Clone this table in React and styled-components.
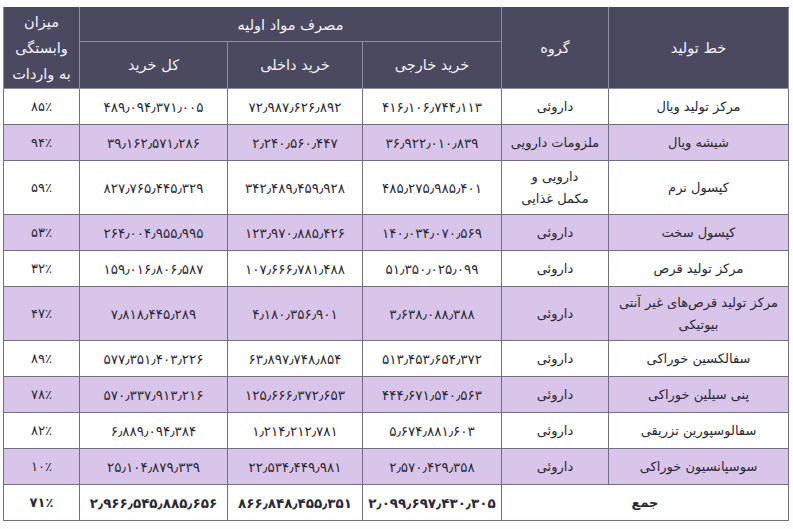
import styled, { createGlobalStyle } from "styled-components";

const GlobalStyle = createGlobalStyle`
	html, body {
		margin: 0;
		padding: 0;
		background: #ffffff;
	}
	body {
		font-family: "DejaVu Sans", "Noto Sans", sans-serif;
	}
`;

const Page = styled.div`
	width: 793px;
	height: 529px;
	padding: 7px 5px 0 3px;
	box-sizing: border-box;
	background: #fdfdfd;
`;

const Table = styled.table`
	width: 785px;
	border-collapse: collapse;
	table-layout: fixed;
	direction: rtl;
	color: #2a2934;
	font-size: 13px;
	border: 1.5px solid #55566a;
`;

const HeadCell = styled.th`
	background: #4a4960;
	color: #f4f3f8;
	font-weight: normal;
	font-size: 14.5px;
	line-height: 26px;
	height: ${({ $h }) => $h || 33}px;
	padding: 0 4px;
	border: 1px solid #8d8ca3;
	border-top-color: #4a4960;
	text-align: center;
	vertical-align: middle;
`;

const Row = styled.tr`
	background: ${({ $shade }) => ($shade ? "#d9c4ea" : "#ffffff")};
`;

const Cell = styled.td`
	height: ${({ $tall }) => ($tall ? 53 : 35)}px;
	padding: 0 4px;
	border: 1px solid #6f7084;
	text-align: center;
	vertical-align: middle;
	line-height: 22px;
	font-weight: ${({ $bold }) => ($bold ? "bold" : "normal")};
`;

const Num = styled(Cell)`
	direction: ltr;
	font-size: 13.5px;
	letter-spacing: 0.4px;
`;

// ردیف‌های جدول: خط تولید، گروه، خرید خارجی، خرید داخلی، کل خرید، وابستگی
const rows = [
	["مرکز تولید ویال", "داروئی", "۴۱۶٫۱۰۶٫۷۴۴٫۱۱۳", "۷۲٫۹۸۷٫۶۲۶٫۸۹۲", "۴۸۹٫۰۹۴٫۳۷۱٫۰۰۵", "۸۵٪"],
	["شیشه ویال", "ملزومات دارویی", "۳۶٫۹۲۲٫۰۱۰٫۸۳۹", "۲٫۲۴۰٫۵۶۰٫۴۴۷", "۳۹٫۱۶۲٫۵۷۱٫۲۸۶", "۹۴٪"],
	["کپسول نرم", "دارویی و\nمکمل غذایی", "۴۸۵٫۲۷۵٫۹۸۵٫۴۰۱", "۳۴۲٫۴۸۹٫۴۵۹٫۹۲۸", "۸۲۷٫۷۶۵٫۴۴۵٫۳۲۹", "۵۹٪", true],
	["کپسول سخت", "داروئی", "۱۴۰٫۰۳۴٫۰۷۰٫۵۶۹", "۱۲۳٫۹۷۰٫۸۸۵٫۴۲۶", "۲۶۴٫۰۰۴٫۹۵۵٫۹۹۵", "۵۳٪"],
	["مرکز تولید قرص", "داروئی", "۵۱٫۳۵۰٫۰۲۵٫۰۹۹", "۱۰۷٫۶۶۶٫۷۸۱٫۴۸۸", "۱۵۹٫۰۱۶٫۸۰۶٫۵۸۷", "۳۲٪"],
	["مرکز تولید قرص‌های غیر آنتی\nبیوتیکی", "داروئی", "۳٫۶۳۸٫۰۸۸٫۳۸۸", "۴٫۱۸۰٫۳۵۶٫۹۰۱", "۷٫۸۱۸٫۴۴۵٫۲۸۹", "۴۷٪", true],
	["سفالکسین خوراکی", "داروئی", "۵۱۳٫۴۵۳٫۶۵۴٫۳۷۲", "۶۳٫۸۹۷٫۷۴۸٫۸۵۴", "۵۷۷٫۳۵۱٫۴۰۳٫۲۲۶", "۸۹٪"],
	["پنی سیلین خوراکی", "داروئی", "۴۴۴٫۶۷۱٫۵۴۰٫۵۶۳", "۱۲۵٫۶۶۶٫۳۷۲٫۶۵۳", "۵۷۰٫۳۳۷٫۹۱۳٫۲۱۶", "۷۸٪"],
	["سفالوسپورین تزریقی", "داروئی", "۵٫۶۷۴٫۸۸۱٫۶۰۳", "۱٫۲۱۴٫۲۱۲٫۷۸۱", "۶٫۸۸۹٫۰۹۴٫۳۸۴", "۸۲٪"],
	["سوسپانسیون خوراکی", "داروئی", "۲٫۵۷۰٫۴۲۹٫۳۵۸", "۲۲٫۵۳۴٫۴۴۹٫۹۸۱", "۲۵٫۱۰۴٫۸۷۹٫۳۳۹", "۱۰٪"],
];

const Lines = ({ text }) =>
	text.split("\n").map((line, i) => (
		<span key={i}>
			{i > 0 && <br />}
			{line}
		</span>
	));

export default function App() {
	return (
		<Page>
			<GlobalStyle />
			<Table>
				<colgroup>
					<col style={{ width: 180 }} />
					<col style={{ width: 107 }} />
					<col style={{ width: 139 }} />
					<col style={{ width: 135 }} />
					<col style={{ width: 148 }} />
					<col style={{ width: 76 }} />
				</colgroup>
				<thead>
					<tr>
						<HeadCell rowSpan={2}>خط تولید</HeadCell>
						<HeadCell rowSpan={2}>گروه</HeadCell>
						<HeadCell colSpan={3}>مصرف مواد اولیه</HeadCell>
						<HeadCell rowSpan={2}>
							میزان
							<br />
							وابستگی
							<br />
							به واردات
						</HeadCell>
					</tr>
					<tr>
						<HeadCell $h={46}>خرید خارجی</HeadCell>
						<HeadCell $h={46}>خرید داخلی</HeadCell>
						<HeadCell $h={46}>کل خرید</HeadCell>
					</tr>
				</thead>
				<tbody>
					{rows.map(([line, group, ext, dom, total, dep, tall], i) => (
						<Row key={line} $shade={i % 2 === 1}>
							<Cell $tall={tall}>
								<Lines text={line} />
							</Cell>
							<Cell $tall={tall}>
								<Lines text={group} />
							</Cell>
							<Num>{ext}</Num>
							<Num>{dom}</Num>
							<Num>{total}</Num>
							<Cell>{dep}</Cell>
						</Row>
					))}
					<Row>
						<Cell colSpan={2} $bold>
							جمع
						</Cell>
						<Num $bold>۲٫۰۹۹٫۶۹۷٫۴۳۰٫۳۰۵</Num>
						<Num $bold>۸۶۶٫۸۴۸٫۴۵۵٫۳۵۱</Num>
						<Num $bold>۲٫۹۶۶٫۵۴۵٫۸۸۵٫۶۵۶</Num>
						<Cell $bold>۷۱٪</Cell>
					</Row>
				</tbody>
			</Table>
		</Page>
	);
}
